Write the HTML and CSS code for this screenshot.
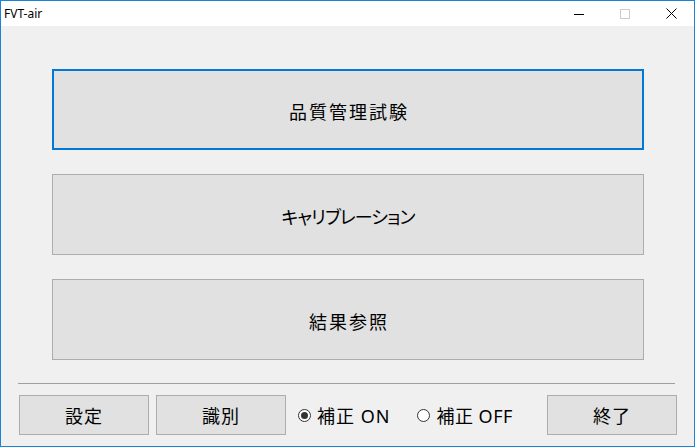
FILE: index.html
```html
<!DOCTYPE html>
<html lang="ja">
<head>
<meta charset="utf-8">
<title>FVT-air</title>
<link rel="stylesheet" href="styles.css">
</head>
<body>
<div class="window">
  <div class="titlebar">
    <span class="title">FVT-air</span>
    <div class="caption">
      <span class="cap-btn"><svg width="10" height="10" viewBox="0 0 10 10"><path d="M0 5.5H10" stroke="#000" stroke-width="1"/></svg></span>
      <span class="cap-btn"><svg width="10" height="10" viewBox="0 0 10 10"><rect x="0.5" y="0.5" width="9" height="9" fill="none" stroke="#cccccc" stroke-width="1"/></svg></span>
      <span class="cap-btn"><svg width="11" height="11" viewBox="0 0 11 11"><path d="M0.5 0.5L10.5 10.5M10.5 0.5L0.5 10.5" stroke="#000" stroke-width="1"/></svg></span>
    </div>
  </div>
  <div class="content">
    <div class="menu">
      <button class="big-btn focused"><span class="kanji">品質管理試験</span></button>
      <button class="big-btn"><span class="kana">キャリブレーション</span></button>
      <button class="big-btn"><span class="kanji">結果参照</span></button>
    </div>
    <div class="separator"></div>
    <div class="bottom">
      <button class="small-btn">設定</button>
      <button class="small-btn">識別</button>
      <label class="radio first"><span class="circle checked"></span>補正 ON</label>
      <label class="radio second"><span class="circle"></span>補正 OFF</label>
      <button class="small-btn end">終了</button>
    </div>
  </div>
</div>
</body>
</html>
```

FILE: styles.css
```css
html, body {
  margin: 0;
  padding: 0;
  background: #f0f0f0;
}

.window {
  box-sizing: border-box;
  width: 695px;
  height: 447px;
  border: 1px solid #1883d7;
  background: #f0f0f0;
  display: flex;
  flex-direction: column;
  font-family: "Noto Sans", "Noto Sans CJK JP", sans-serif;
  color: #000;
}

.titlebar {
  height: 25px;
  background: #fff;
  display: flex;
  align-items: center;
  justify-content: space-between;
}

.title {
  font-family: "Noto Sans", sans-serif;
  font-size: 12px;
  padding-left: 3px;
  margin-top: -1px;
}

.caption {
  display: flex;
  height: 100%;
}

.cap-btn {
  width: 46px;
  display: flex;
  align-items: center;
  justify-content: center;
}

.cap-btn svg {
  display: block;
}

.content {
  flex: 1;
  display: flex;
  flex-direction: column;
}

.menu {
  display: flex;
  flex-direction: column;
  gap: 24px;
  padding: 43px 0 0 51px;
}

.big-btn {
  box-sizing: border-box;
  width: 592px;
  height: 81px;
  margin: 0;
  padding: 0;
  background: #e1e1e1;
  border: 1px solid #adadad;
  font-family: "Noto Sans", "Noto Sans CJK JP", sans-serif;
  font-size: 18px;
  color: #000;
  display: flex;
  align-items: center;
  justify-content: center;
}

.big-btn.focused {
  border: 2px solid #0078d7;
}

.kanji {
  letter-spacing: 2px;
  margin-right: -2px;
  margin-top: 3px;
}

.kana {
  font-feature-settings: "palt";
  letter-spacing: -0.9px;
  margin-top: 3px;
}

.separator {
  height: 1px;
  background: #a0a0a0;
  margin: 23px 19px 0 17px;
}

.bottom {
  display: flex;
  align-items: center;
  padding: 11px 17px 0 18px;
}

.small-btn {
  box-sizing: border-box;
  width: 130px;
  height: 40px;
  margin: 0;
  padding: 0;
  background: #e1e1e1;
  border: 1px solid #adadad;
  font-family: "Noto Sans", "Noto Sans CJK JP", sans-serif;
  font-size: 18px;
  letter-spacing: 1px;
  color: #000;
}

.small-btn + .small-btn {
  margin-left: 7px;
}

.small-btn.end {
  margin-left: auto;
}

.radio {
  display: flex;
  align-items: center;
  font-size: 18px;
  letter-spacing: 1px;
}

.radio.first {
  margin-left: 12px;
}

.radio.second {
  margin-left: 27px;
  letter-spacing: 0.5px;
}

.circle {
  box-sizing: border-box;
  width: 13px;
  height: 13px;
  border: 1px solid #333;
  border-radius: 50%;
  background: #fff;
  margin-right: 6px;
  display: flex;
  align-items: center;
  justify-content: center;
}

.circle.checked::after {
  content: "";
  width: 7px;
  height: 7px;
  border-radius: 50%;
  background: #333;
}
```
